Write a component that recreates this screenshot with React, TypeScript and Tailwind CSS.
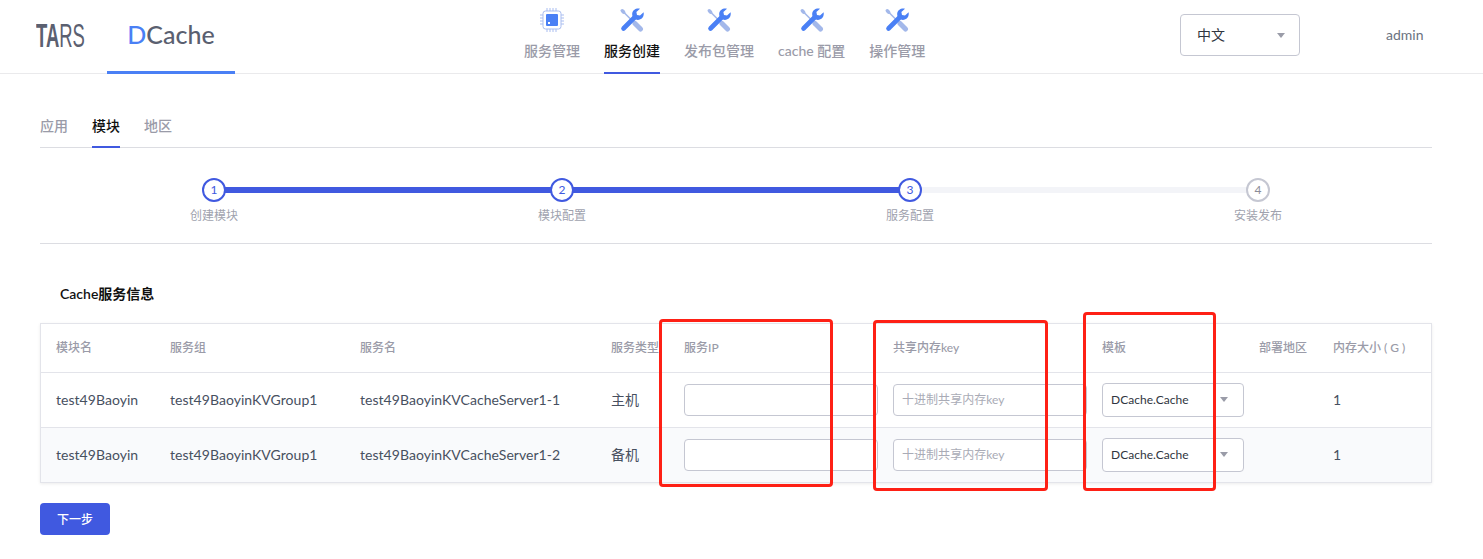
const fontStack = "font-['Lato','Noto_Sans_CJK_SC',sans-serif]";

function ChipIcon() {
  return (
    <svg width="24" height="24" viewBox="0 0 24 24" fill="none">
      <g stroke="#a9bdf0" strokeWidth="1">
        <path d="M7 0v3M10 0v3M13 0v3M16 0v3M7 21v3M10 21v3M13 21v3M16 21v3M0 7h3M0 10h3M0 13h3M0 16h3M21 7h3M21 10h3M21 13h3M21 16h3" />
        <rect x="3" y="3" width="18" height="18" rx="2.5" />
      </g>
      <rect x="6" y="6" width="12" height="12" rx="1" fill="#4a80f5" />
      <rect x="8" y="14" width="2" height="2" fill="#fff" />
    </svg>
  );
}

function ToolsIcon() {
  return (
    <svg width="24" height="24" viewBox="0 0 24 24" fill="none">
      <path d="M3 3.5L13 13.5" stroke="#a3b8ea" strokeWidth="1.6" />
      <ellipse cx="3" cy="3.5" rx="1.8" ry="2.8" transform="rotate(-45 3 3.5)" fill="#a3b8ea" />
      <path d="M15 15.5L20.5 21" stroke="#a3b8ea" strokeWidth="5" strokeLinecap="round" />
      <path d="M3.5 20.5L15 9" stroke="#4a80f5" strokeWidth="4.6" strokeLinecap="round" />
      <path
        d="M23.6 4.2L20 7.6L17 7L16.4 4L20 0.7C16.6 -0.4 12.6 1.6 12.2 5.6C12 7.8 12.8 9.6 14.2 10.8C16.8 12.6 20.4 12.2 22.4 9.8C23.6 8.2 24 6.2 23.6 4.2Z"
        fill="#4a80f5"
      />
    </svg>
  );
}

function Caret() {
  return <span className="w-0 h-0 border-x-4 border-x-transparent border-t-[5px] border-t-[#9a9ca8]" />;
}

function NavItem({ label, active, chip }: { label: string; active?: boolean; chip?: boolean }) {
  return (
    <div className={`relative h-[74px] flex flex-col items-center pt-[8px] ${active ? "text-[#111] border-b-2 border-[#4059e0]" : "text-[#9a9ba8]"}`}>
      {chip ? <ChipIcon /> : <ToolsIcon />}
      <span className="mt-[8px] text-sm leading-[22px] font-medium whitespace-nowrap">{label}</span>
    </div>
  );
}

function Step({ n, label, done }: { n: number; label: string; done: boolean }) {
  return (
    <div className="relative w-[96px] flex flex-col items-center">
      <div className={`relative z-10 w-6 h-6 rounded-full bg-white border-2 flex items-center justify-center text-xs ${done ? "border-[#4059e0] text-[#4059e0]" : "border-[#c5c7d2] text-[#8a8c98]"}`}>
        {n}
      </div>
      <span className="mt-[4px] text-xs leading-[20px] text-[#a0a2ae] whitespace-nowrap">{label}</span>
    </div>
  );
}

function Row({ type, striped }: { type: string; striped?: boolean }) {
  const suffix = type === "主机" ? "1" : "2";
  return (
    <tr className={`h-[55px] border-t border-[#e3e4ea] text-sm tracking-[0.04px] text-[#47505f] ${striped ? "bg-[#f9fafc]" : ""}`}>
      <td className="pl-[15px]">test49Baoyin</td>
      <td className="pl-4">test49BaoyinKVGroup1</td>
      <td className="pl-4">test49BaoyinKVCacheServer1-{suffix}</td>
      <td className="pl-4">{type}</td>
      <td className="pl-4">
        <div className="w-[194px] h-8 rounded border border-[#c5c7d2] bg-white" />
      </td>
      <td className="pl-4">
        <div className="w-[194px] h-8 rounded border border-[#c5c7d2] bg-white flex items-center pl-2 text-xs text-[#a9abb6]">
          十进制共享内存key
        </div>
      </td>
      <td className="pl-4">
        <div className="w-[142px] h-[34px] rounded border border-[#c5c7d2] bg-white flex items-center justify-between pl-2 pr-[15px] text-xs text-[#2f3540]">
          DCache.Cache
          <Caret />
        </div>
      </td>
      <td />
      <td className="pl-4">1</td>
    </tr>
  );
}

export default function App() {
  return (
    <div className={`relative w-[1483px] h-[559px] overflow-hidden bg-white ${fontStack}`}>
      {/* Header */}
      <header className="relative h-[74px] border-b border-[#eaeaec]">
        <div className="absolute left-[36px] top-[17px] origin-left scale-x-[0.56] font-['Liberation_Sans'] text-[33px] leading-[38px] whitespace-nowrap text-[#5b6070]">
          <span className="font-bold">TA</span>
          <span className="font-normal">RS</span>
        </div>
        <div className="absolute left-[107px] top-0 w-[128px] h-[74px] border-b-[3px] border-[#4a80f5] flex justify-center pt-[16px] text-[25px] leading-[36px] font-medium text-[#5a6070]">
          <span><span className="text-[#4a80f5]">D</span>Cache</span>
        </div>
        <nav className="absolute left-[524px] top-0 flex gap-6">
          <NavItem label="服务管理" chip />
          <NavItem label="服务创建" active />
          <NavItem label="发布包管理" />
          <NavItem label="cache 配置" />
          <NavItem label="操作管理" />
        </nav>
        <div className="absolute left-[1180px] top-[14px] w-[120px] h-[42px] rounded border border-[#c5c7d2] flex items-center justify-between pl-[16px] pr-[14px] text-sm text-[#2f3540]">
          中文
          <Caret />
        </div>
        <span className="absolute left-[1386px] top-[25px] text-sm leading-[20px] text-[#6b7280]">admin</span>
      </header>

      <main className="pl-10 pr-[51px]">
        {/* Tabs */}
        <div className="mt-[40px] h-[34px] flex gap-6 border-b border-[#dcdde2] text-sm font-medium">
          <span className="h-[34px] leading-[24px] text-[#9a9ba8]">应用</span>
          <span className="h-[34px] leading-[24px] text-[#111] border-b-2 border-[#4059e0]">模块</span>
          <span className="h-[34px] leading-[24px] text-[#9a9ba8]">地区</span>
        </div>

        {/* Steps */}
        <div className="relative h-[96px] pt-[30px] pl-[126px] border-b border-[#dcdde2] flex gap-[252px]">
          <div className="absolute left-[174px] top-[39px] w-[696px] h-[6px] bg-[#4059e0]" />
          <div className="absolute left-[870px] top-[39px] w-[348px] h-[6px] bg-[#f3f4f8]" />
          <Step n={1} label="创建模块" done />
          <Step n={2} label="模块配置" done />
          <Step n={3} label="服务配置" done />
          <Step n={4} label="安装发布" done={false} />
        </div>

        <h2 className="mt-[39px] pl-5 text-sm leading-[22px] font-semibold text-[#111]">Cache服务信息</h2>

        {/* Table */}
        <div className="mt-[18px] border border-[#e3e4ea] shadow-[0_1px_3px_rgba(0,0,0,0.08)]">
          <table className="w-full table-fixed border-collapse">
            <colgroup>
              <col className="w-[113px]" />
              <col className="w-[190px]" />
              <col className="w-[251px]" />
              <col className="w-[73px]" />
              <col className="w-[209px]" />
              <col className="w-[209px]" />
              <col className="w-[157px]" />
              <col className="w-[74px]" />
              <col />
            </colgroup>
            <thead>
              <tr className="h-[48px] text-left text-xs font-medium text-[#9a9ba8]">
                <th className="pl-[15px] font-medium">模块名</th>
                <th className="pl-4 font-medium">服务组</th>
                <th className="pl-4 font-medium">服务名</th>
                <th className="pl-4 font-medium whitespace-nowrap">服务类型</th>
                <th className="pl-4 font-medium">服务IP</th>
                <th className="pl-4 font-medium">共享内存key</th>
                <th className="pl-4 font-medium">模板</th>
                <th className="pl-4 font-medium whitespace-nowrap">部署地区</th>
                <th className="pl-4 font-medium whitespace-nowrap">内存大小 ( G )</th>
              </tr>
            </thead>
            <tbody className="text-left">
              <Row type="主机" />
              <Row type="备机" striped />
            </tbody>
          </table>
        </div>

        <button className="mt-[20px] w-[70px] h-8 pt-[2px] rounded bg-[#4059e0] text-white text-xs font-medium">下一步</button>
      </main>

      {/* Red annotation boxes */}
      <div className="absolute left-[659px] top-[319px] w-[174px] h-[168px] border-[3px] border-[#fe2015] rounded-sm" />
      <div className="absolute left-[873px] top-[320px] w-[175px] h-[171px] border-[3px] border-[#fe2015] rounded-sm" />
      <div className="absolute left-[1083px] top-[312px] w-[133px] h-[179px] border-[3px] border-[#fe2015] rounded-sm" />
    </div>
  );
}
